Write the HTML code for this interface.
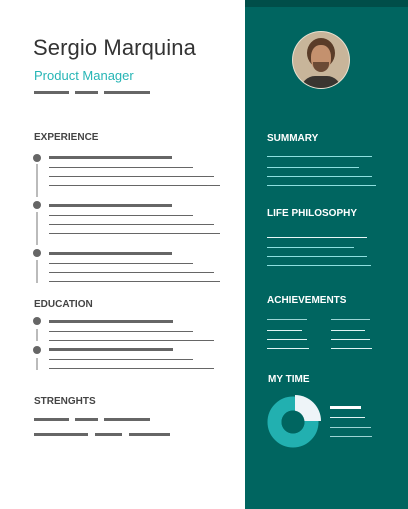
<!DOCTYPE html>
<html><head><style>
*{margin:0;padding:0}
body{width:408px;height:509px;position:relative;overflow:hidden;background:#fff;font-family:"Liberation Sans",sans-serif}
.a{position:absolute}
.r{position:absolute;height:1px;background:#666}
.k{position:absolute;height:3px;background:#666}
.d{position:absolute;width:8px;height:8px;border-radius:50%;background:#666}
.v{position:absolute;width:2px;background:#bbb;left:36px}
.h{position:absolute;font-size:10px;font-weight:bold;color:#444}
.hw{position:absolute;font-size:10px;font-weight:bold;color:#fff}
.w{position:absolute;height:1px;background:#8ee0e0}
</style></head><body>
<div class="a" style="left:245px;top:0;width:163px;height:509px;background:#006560"></div>
<div class="a" style="left:245px;top:0;width:163px;height:7px;background:#004e49"></div>

<div class="a" style="left:33px;top:35px;font-size:22px;color:#333;letter-spacing:0.1px">Sergio Marquina</div>
<div class="a" style="left:34px;top:68px;font-size:13px;color:#26b5b5">Product Manager</div>
<div class="k" style="left:34px;top:91px;width:35px"></div>
<div class="k" style="left:75px;top:91px;width:23px"></div>
<div class="k" style="left:104px;top:91px;width:46px"></div>

<div class="h" style="left:34px;top:132px">EXPERIENCE</div>
<div class="d" style="left:33px;top:154px"></div><div class="v" style="top:164px;height:33px"></div>
<div class="k" style="left:49px;top:156px;width:123px"></div>
<div class="r" style="left:49px;top:167px;width:144px"></div>
<div class="r" style="left:49px;top:176px;width:165px"></div>
<div class="r" style="left:49px;top:185px;width:171px"></div>
<div class="d" style="left:33px;top:201px"></div><div class="v" style="top:212px;height:33px"></div>
<div class="k" style="left:49px;top:204px;width:123px"></div>
<div class="r" style="left:49px;top:215px;width:144px"></div>
<div class="r" style="left:49px;top:224px;width:165px"></div>
<div class="r" style="left:49px;top:233px;width:171px"></div>
<div class="d" style="left:33px;top:249px"></div><div class="v" style="top:260px;height:23px"></div>
<div class="k" style="left:49px;top:252px;width:123px"></div>
<div class="r" style="left:49px;top:263px;width:144px"></div>
<div class="r" style="left:49px;top:272px;width:165px"></div>
<div class="r" style="left:49px;top:281px;width:171px"></div>

<div class="h" style="left:34px;top:299px">EDUCATION</div>
<div class="d" style="left:33px;top:317px"></div><div class="v" style="top:329px;height:12px"></div>
<div class="k" style="left:49px;top:320px;width:124px"></div>
<div class="r" style="left:49px;top:331px;width:144px"></div>
<div class="r" style="left:49px;top:340px;width:165px"></div>
<div class="d" style="left:33px;top:346px"></div><div class="v" style="top:358px;height:12px"></div>
<div class="k" style="left:49px;top:348px;width:124px"></div>
<div class="r" style="left:49px;top:359px;width:144px"></div>
<div class="r" style="left:49px;top:368px;width:165px"></div>

<div class="h" style="left:34px;top:396px">STRENGHTS</div>
<div class="k" style="left:34px;top:418px;width:35px"></div>
<div class="k" style="left:75px;top:418px;width:23px"></div>
<div class="k" style="left:104px;top:418px;width:46px"></div>
<div class="k" style="left:34px;top:433px;width:54px"></div>
<div class="k" style="left:95px;top:433px;width:27px"></div>
<div class="k" style="left:129px;top:433px;width:41px"></div>

<div class="a" style="left:293px;top:32px;width:56px;height:56px;border-radius:50%;overflow:hidden;background:#c8b59a;box-shadow:0 0 0 1px #e8e0d0">
  <div class="a" style="left:14px;top:6px;width:28px;height:30px;border-radius:50%;background:#5a3c28"></div>
  <div class="a" style="left:18px;top:13px;width:20px;height:26px;border-radius:45%;background:#c4916e"></div>
  <div class="a" style="left:20px;top:30px;width:16px;height:10px;border-radius:0 0 8px 8px;background:#6b4a35"></div>
  <div class="a" style="left:8px;top:44px;width:40px;height:20px;border-radius:14px 14px 0 0;background:#3a3530"></div>
</div>

<div class="hw" style="left:267px;top:133px">SUMMARY</div>
<div class="w" style="left:267px;top:156px;width:105px"></div>
<div class="w" style="left:267px;top:167px;width:92px"></div>
<div class="w" style="left:267px;top:176px;width:105px"></div>
<div class="w" style="left:267px;top:185px;width:109px"></div>

<div class="hw" style="left:267px;top:208px">LIFE PHILOSOPHY</div>
<div class="w" style="left:267px;top:237px;width:100px;background:#e8f8f8"></div>
<div class="w" style="left:267px;top:247px;width:87px"></div>
<div class="w" style="left:267px;top:256px;width:100px"></div>
<div class="w" style="left:267px;top:265px;width:104px"></div>

<div class="hw" style="left:267px;top:295px">ACHIEVEMENTS</div>
<div class="w" style="left:267px;top:319px;width:40px;background:#9cd4d4"></div>
<div class="w" style="left:331px;top:319px;width:39px;background:#9cd4d4"></div>
<div class="w" style="left:267px;top:330px;width:35px;background:#e0f4f4"></div>
<div class="w" style="left:331px;top:330px;width:34px;background:#e0f4f4"></div>
<div class="w" style="left:267px;top:339px;width:40px;background:#e0f4f4"></div>
<div class="w" style="left:331px;top:339px;width:39px;background:#e0f4f4"></div>
<div class="w" style="left:267px;top:348px;width:42px;background:#e0f4f4"></div>
<div class="w" style="left:331px;top:348px;width:41px;background:#e0f4f4"></div>

<div class="hw" style="left:268px;top:374px">MY TIME</div>
<svg class="a" style="left:260px;top:390px" width="70" height="64">
<circle cx="33" cy="32" r="18.5" fill="none" stroke="#22b0b0" stroke-width="14"/>
<path d="M35 5 A26 26 0 0 1 61 31 L35 31 Z" fill="#eef4f8"/>
<circle cx="33" cy="32" r="11.5" fill="#006560"/>
</svg>
<div class="a" style="left:330px;top:406px;width:31px;height:3px;background:#fff"></div>
<div class="w" style="left:330px;top:417px;width:35px;background:#e0f4f4"></div>
<div class="w" style="left:330px;top:427px;width:41px;background:#9cd4d4"></div>
<div class="w" style="left:330px;top:436px;width:42px;background:#9cd4d4"></div>
</body></html>
